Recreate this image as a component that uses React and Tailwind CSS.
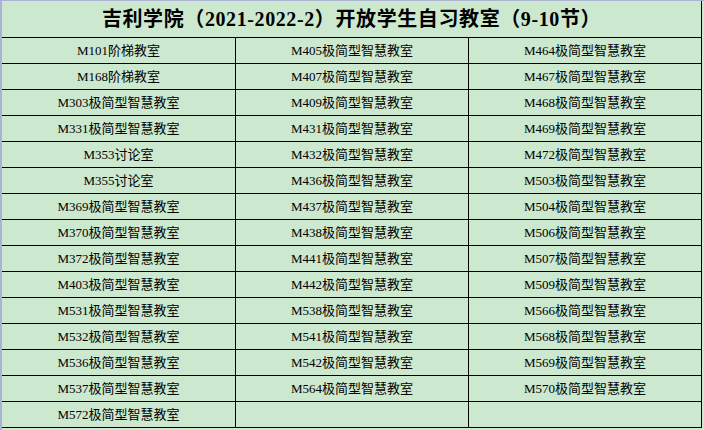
import React from "react";

const ZH = "极简型智慧教室";

const rows = [
  ["M101阶梯教室", "M405" + ZH, "M464" + ZH],
  ["M168阶梯教室", "M407" + ZH, "M467" + ZH],
  ["M303" + ZH, "M409" + ZH, "M468" + ZH],
  ["M331" + ZH, "M431" + ZH, "M469" + ZH],
  ["M353讨论室", "M432" + ZH, "M472" + ZH],
  ["M355讨论室", "M436" + ZH, "M503" + ZH],
  ["M369" + ZH, "M437" + ZH, "M504" + ZH],
  ["M370" + ZH, "M438" + ZH, "M506" + ZH],
  ["M372" + ZH, "M441" + ZH, "M507" + ZH],
  ["M403" + ZH, "M442" + ZH, "M509" + ZH],
  ["M531" + ZH, "M538" + ZH, "M566" + ZH],
  ["M532" + ZH, "M541" + ZH, "M568" + ZH],
  ["M536" + ZH, "M542" + ZH, "M569" + ZH],
  ["M537" + ZH, "M564" + ZH, "M570" + ZH],
  ["M572" + ZH, "", ""],
];

const font = {
  fontFamily: '"Liberation Serif", "Noto Sans CJK SC", serif',
};

export default function App() {
  return (
    <div
      className="h-[430px] w-[704px] overflow-hidden border-t border-l-2 border-[#aab4d2] bg-[#cce8cf] text-black"
      style={font}
    >
      <div className="w-[700px] border-r border-black">
        <div className="flex h-[37px] items-center justify-center border-b border-black pb-px text-[20px] font-semibold tracking-[0.6px]">
          吉利学院（2021-2022-2）开放学生自习教室（9-10节）
        </div>
        {rows.map((r, i) => (
          <div key={i} className="grid h-[26px] grid-cols-[234px_233px_232px] border-b border-black">
            <div className="flex items-center justify-center border-r border-black text-[13px]">{r[0]}</div>
            <div className="flex items-center justify-center border-r border-black text-[13px]">{r[1]}</div>
            <div className="flex items-center justify-center text-[13px]">{r[2]}</div>
          </div>
        ))}
      </div>
    </div>
  );
}
